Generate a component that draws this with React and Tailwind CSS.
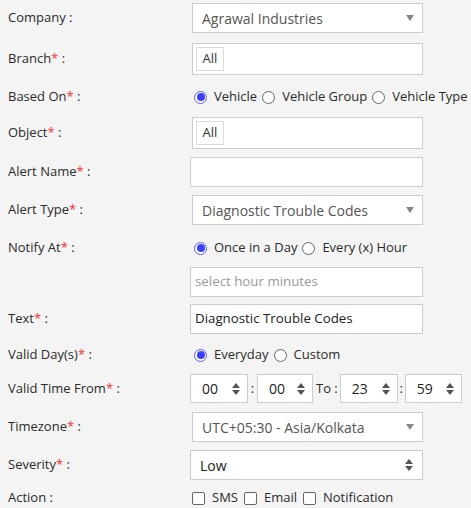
import React from 'react';

const font = { fontFamily: '"Open Sans", "Liberation Sans", sans-serif' };

function Label({ text, req }) {
  return (
    <div className="w-[191px] shrink-0 pl-2 text-[13px] text-[#2b2b2b]">
      {text}
      {req && <span className="text-[#ff2a2a]">*</span>} :
    </div>
  );
}

function Caret() {
  return (
    <svg width="8" height="6" viewBox="0 0 8 6" className="absolute right-[8px] top-1/2 -translate-y-1/2">
      <path d="M0 0 L8 0 L4 6 Z" fill="#888" />
    </svg>
  );
}

function Spinner({ className }) {
  return (
    <svg width="8" height="12" viewBox="0 0 8 12" className={className}>
      <path d="M0 5 L4 0 L8 5 Z" fill="#555" />
      <path d="M0 7 L4 12 L8 7 Z" fill="#555" />
    </svg>
  );
}

function Radio({ on }) {
  return on ? (
    <span className="flex h-[13px] w-[13px] shrink-0 items-center justify-center rounded-full border border-[#5a5af0] bg-white">
      <span className="h-[8px] w-[8px] rounded-full bg-[#3d3dff]" />
    </span>
  ) : (
    <span className="h-[13px] w-[13px] shrink-0 rounded-full border border-[#666] bg-white" />
  );
}

function RadioGroup({ items }) {
  return (
    <div className="flex items-center whitespace-nowrap pl-[3px] text-[13px] text-[#2b2b2b]">
      {items.map((it, i) => (
        <span key={it.label} className={`flex items-center gap-[7px] ${i > 0 ? 'ml-[5px]' : ''}`}>
          <Radio on={it.on} />
          {it.label}
        </span>
      ))}
    </div>
  );
}

function SelectBox({ value }) {
  return (
    <div className="relative ml-[1px] flex h-[30px] w-[231px] items-center border border-[#ccc] bg-white pl-[9px] text-[14px] text-[#555]">
      {value}
      <Caret />
    </div>
  );
}

function ChipBox() {
  return (
    <div className="ml-[1px] flex h-[32px] w-[231px] items-center border border-[#ccc] bg-white pl-[3px]">
      <span className="flex h-[24px] w-[28px] items-center justify-center border border-[#ddd] text-[13px] text-[#333]">All</span>
    </div>
  );
}

function TextBox({ value, placeholder }) {
  return (
    <div className="flex h-[30px] w-[233px] items-center border border-[#ccc] bg-white pl-[4px] text-[13.3px] text-[#222]">
      {value || <span className="text-[#999]">{placeholder}</span>}
    </div>
  );
}

function TimeBox({ value, w }) {
  return (
    <div className={`relative flex h-[29px] items-center border border-[#ccc] bg-white pl-[11px] text-[14px] text-[#222] ${w}`}>
      {value}
      <Spinner className="absolute right-[7px] top-1/2 -translate-y-1/2" />
    </div>
  );
}

function Check({ label }) {
  return (
    <span className="flex items-center gap-[7px]">
      <span className="h-[13px] w-[13px] rounded-[2px] border border-[#666] bg-white" />
      {label}
    </span>
  );
}

export default function App() {
  return (
    <div className="min-h-[508px] w-[471px] overflow-hidden bg-[#f4f4f4] pt-[3px]" style={font}>
      <div className="flex items-center">
        <Label text="Company" />
        <SelectBox value="Agrawal Industries" />
      </div>

      <div className="mt-[10px] flex items-center">
        <Label text="Branch" req />
        <ChipBox />
      </div>

      <div className="mt-[11px] flex h-[22px] items-center">
        <Label text="Based On" req />
        <RadioGroup items={[{ label: 'Vehicle', on: true }, { label: 'Vehicle Group' }, { label: 'Vehicle Type' }]} />
      </div>

      <div className="mt-[9px] flex items-center">
        <Label text="Object" req />
        <ChipBox />
      </div>

      <div className="mt-[8px] flex items-center">
        <Label text="Alert Name" req />
        <div className="-ml-[1px]">
          <TextBox />
        </div>
      </div>

      <div className="mt-[8px] flex items-center">
        <Label text="Alert Type" req />
        <SelectBox value="Diagnostic Trouble Codes" />
      </div>

      <div className="mt-[12px] flex h-[22px] items-center">
        <Label text="Notify At" req />
        <RadioGroup items={[{ label: 'Once in a Day', on: true }, { label: 'Every (x) Hour' }]} />
      </div>

      <div className="mt-[8px] flex items-center">
        <div className="w-[191px] shrink-0" />
        <div className="-ml-[1px]">
          <TextBox placeholder="select hour minutes" />
        </div>
      </div>

      <div className="mt-[7px] flex items-center">
        <Label text="Text" req />
        <div className="-ml-[1px]">
          <TextBox value="Diagnostic Trouble Codes" />
        </div>
      </div>

      <div className="mt-[10px] flex h-[22px] items-center">
        <Label text="Valid Day(s)" req />
        <RadioGroup items={[{ label: 'Everyday', on: true }, { label: 'Custom' }]} />
      </div>

      <div className="mt-[8px] flex items-center">
        <Label text="Valid Time From" req />
        <div className="-ml-[1px] flex items-center text-[13px] text-[#2b2b2b]">
          <TimeBox value="00" w="w-[58px]" />
          <span className="w-[9px] text-center">:</span>
          <TimeBox value="00" w="w-[56px]" />
          <span className="ml-[3px] mr-[2px]">To :</span>
          <TimeBox value="23" w="w-[58px]" />
          <span className="w-[7px] text-center">:</span>
          <TimeBox value="59" w="w-[57px]" />
        </div>
      </div>

      <div className="mt-[9px] flex items-center">
        <Label text="Timezone" req />
        <SelectBox value="UTC+05:30 - Asia/Kolkata" />
      </div>

      <div className="mt-[8px] flex items-center">
        <Label text="Severity" req />
        <div className="relative -ml-[1px] flex h-[30px] w-[233px] items-center border border-[#ccc] bg-white pl-[9px] text-[14px] text-[#222]">
          Low
          <Spinner className="absolute right-[9px] top-1/2 -translate-y-1/2" />
        </div>
      </div>

      <div className="mt-[9px] flex h-[18px] items-center">
        <Label text="Action" />
        <div className="ml-[1px] flex items-center gap-[6px] text-[13px] text-[#2b2b2b]">
          <Check label="SMS" />
          <Check label="Email" />
          <Check label="Notification" />
        </div>
      </div>
    </div>
  );
}
